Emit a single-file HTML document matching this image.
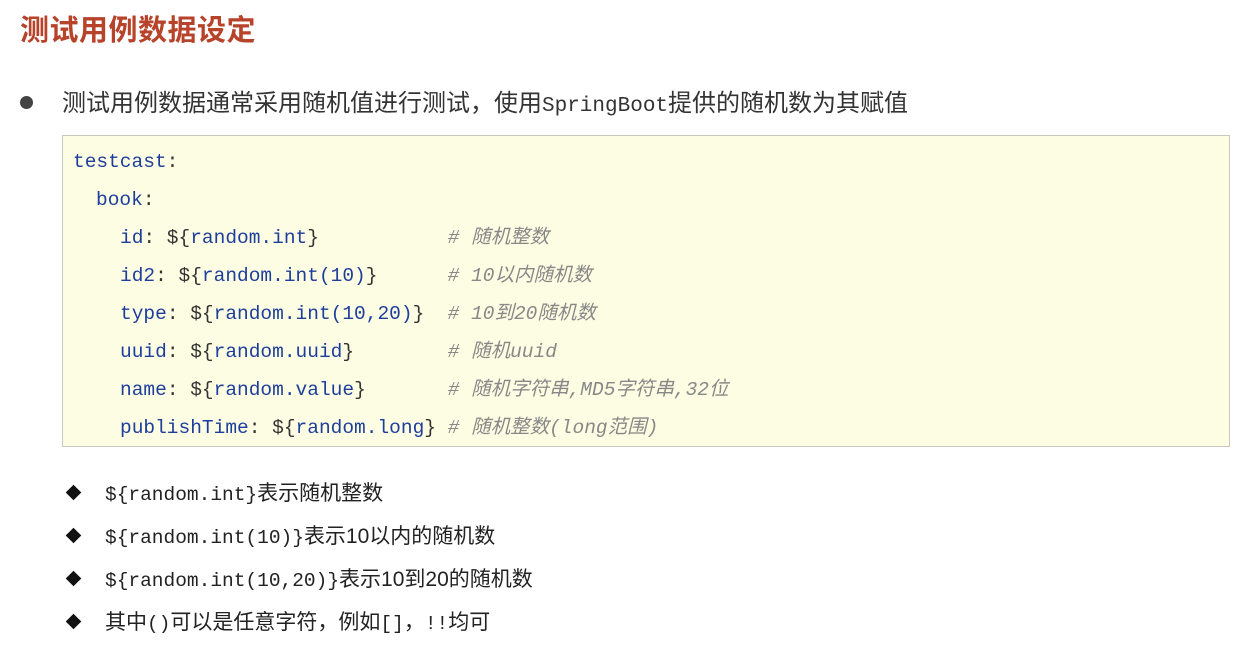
<!DOCTYPE html>
<html><head><meta charset="utf-8"><style>
body{margin:0;width:1246px;height:655px;background:#fff;position:relative;font-family:"Liberation Sans","Noto Sans CJK SC",sans-serif;overflow:hidden}
.a{position:absolute;white-space:pre}
.t{left:20px;top:7px;font-size:29px;font-weight:bold;color:#b8432b;letter-spacing:0.5px}
.b1{left:62px;top:89px;font-size:24px;line-height:30px;color:#333}
.m{font-family:"Liberation Mono","Noto Sans CJK SC",monospace}
.dot{left:20px;top:96px;width:13px;height:13px;border-radius:50%;background:#444}
.box{left:62px;top:135px;width:1168px;height:312px;background:#fdfde3;border:1px solid #c8c8c0;box-sizing:border-box}
.c{font-family:"Liberation Mono","Noto Sans CJK SC",monospace;font-size:19.5px;line-height:24px;color:#1d3e9c}
.k{color:#333}
.cm{color:#888;font-style:italic}
.l{font-size:21px;line-height:26px;color:#222}
.l .m{font-size:19.5px;color:#222}
.dm{width:11px;height:11px;background:#111;transform:rotate(45deg);left:68px}
</style></head><body>
<div class="a t">测试用例数据设定</div>
<div class="a dot"></div>
<div class="a b1">测试用例数据通常采用随机值进行测试，使用<span class="m" style="font-size:21px">SpringBoot</span>提供的随机数为其赋值</div>
<div class="a box"></div>
<div class="a c" style="left:73px;top:150px">testcast<span class="k">:</span></div>
<div class="a c" style="left:96px;top:188px">book<span class="k">:</span></div>
<div class="a c" style="left:120px;top:226px">id<span class="k">: ${</span>random.int<span class="k">}</span>           <span class="cm"># 随机整数</span></div>
<div class="a c" style="left:120px;top:264px">id2<span class="k">: ${</span>random.int(10)<span class="k">}</span>      <span class="cm"># 10以内随机数</span></div>
<div class="a c" style="left:120px;top:302px">type<span class="k">: ${</span>random.int(10,20)<span class="k">}</span>  <span class="cm"># 10到20随机数</span></div>
<div class="a c" style="left:120px;top:340px">uuid<span class="k">: ${</span>random.uuid<span class="k">}</span>        <span class="cm"># 随机uuid</span></div>
<div class="a c" style="left:120px;top:378px">name<span class="k">: ${</span>random.value<span class="k">}</span>       <span class="cm"># 随机字符串,MD5字符串,32位</span></div>
<div class="a c" style="left:120px;top:416px">publishTime<span class="k">: ${</span>random.long<span class="k">}</span> <span class="cm"># 随机整数(long范围)</span></div>
<div class="a dm" style="top:487px"></div>
<div class="a l" style="left:105px;top:481px"><span class="m">${random.int}</span>表示随机整数</div>
<div class="a dm" style="top:530px"></div>
<div class="a l" style="left:105px;top:524px"><span class="m">${random.int(10)}</span>表示10以内的随机数</div>
<div class="a dm" style="top:573px"></div>
<div class="a l" style="left:105px;top:567px"><span class="m">${random.int(10,20)}</span>表示10到20的随机数</div>
<div class="a dm" style="top:616px"></div>
<div class="a l" style="left:105px;top:610px">其中<span class="m">()</span>可以是任意字符，例如<span class="m">[]</span>，<span class="m">!!</span>均可</div>
</body></html>
